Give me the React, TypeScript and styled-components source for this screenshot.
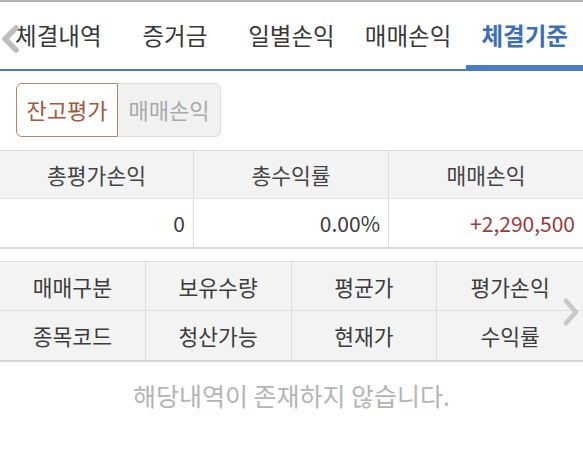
import React, { useState } from "react";
import styled, { createGlobalStyle, css } from "styled-components";

const GlobalStyle = createGlobalStyle`
  html, body { margin: 0; padding: 0; background: #ffffff; }
  body { font-family: "Noto Sans CJK KR", "Noto Sans", sans-serif; color: #333; }
  * { box-sizing: border-box; }
`;

const Page = styled.div`
  width: 583px;
  height: 453px;
  overflow: hidden;
  border-top: 2px solid #b3b3b3;
  position: relative;
`;

const TabBar = styled.div`
  position: relative;
  display: grid;
  grid-template-columns: repeat(5, 1fr);
  height: 69px;
  border-bottom: 2px solid #4a7cc6;
`;

const Tab = styled.div<{ $active?: boolean }>`
  display: flex;
  align-items: center;
  justify-content: center;
  font-size: 23.5px;
  color: #383838;
  padding-bottom: 2px;
  white-space: nowrap;
  ${(p) =>
    p.$active &&
    css`
      color: #3b6fb6;
      font-weight: 700;
      box-shadow: inset 0 -4px 0 #4a7cc6;
    `}
`;

const ChevronLeft = styled.svg`
  position: absolute;
  left: 0;
  top: 22px;
`;

const ChevronRight = styled.svg`
  position: absolute;
  right: 4px;
  top: 296px;
`;

const SegmentRow = styled.div`
  display: flex;
  padding: 12px 0 0 16px;
`;

const Segment = styled.div`
  display: flex;
  height: 54px;
`;

const SegButton = styled.div<{ $active?: boolean }>`
  display: flex;
  align-items: center;
  justify-content: center;
  font-size: 22px;
  padding: 0 0 2px;
  white-space: nowrap;
  ${(p) =>
    p.$active
      ? css`
          width: 102px;
          color: #a4593a;
          background: #ffffff;
          border: 1px solid #b98467;
          border-radius: 6px 0 0 6px;
        `
      : css`
          width: 103px;
          color: #a9a9a9;
          background: #f1f1f1;
          border: 1px solid #dcdcdc;
          border-left: none;
          border-radius: 0 6px 6px 0;
        `}
`;

const SummaryTable = styled.div`
  margin-top: 13px;
  display: grid;
  grid-template-columns: 194px 195px 1fr;
  border-top: 1px solid #dcdcdc;
  border-bottom: 2px solid #dcdcdc;
`;

const Cell = styled.div<{ $head?: boolean; $last?: boolean }>`
  height: 48px;
  display: flex;
  align-items: center;
  font-size: 21.5px;
  border-right: ${(p) => (p.$last ? "none" : "1px solid #dcdcdc")};
  ${(p) =>
    p.$head
      ? css`
          justify-content: center;
          background: #f3f3f3;
          color: #444;
          border-bottom: 1px solid #e3e3e3;
        `
      : css`
          justify-content: flex-end;
          padding-right: 8px;
          background: #ffffff;
          color: #3a3a3a;
          font-size: 21px;
        `}
`;

const Value = styled.span<{ $up?: boolean }>`
  color: ${(p) => (p.$up ? "#9c3a36" : "#3a3a3a")};
`;

const ColumnTable = styled.div`
  margin-top: 12px;
  display: grid;
  grid-template-columns: repeat(4, 1fr);
  border-top: 1px solid #dcdcdc;
  border-bottom: 2px solid #d6d6d6;
  background: #f3f3f3;
`;

const ColCell = styled.div<{ $last?: boolean; $top?: boolean }>`
  height: 49px;
  display: flex;
  align-items: center;
  justify-content: center;
  font-size: 21.5px;
  color: #3c3c3c;
  border-right: ${(p) => (p.$last ? "none" : "1px solid #dcdcdc")};
  border-bottom: ${(p) => (p.$top ? "1px solid #e0e0e0" : "none")};
`;

const Empty = styled.div`
  text-align: center;
  margin-top: 15px;
  font-size: 25px;
  color: #b4b4b4;
  white-space: nowrap;
`;

const tabs = ["체결내역", "증거금", "일별손익", "매매손익", "체결기준"];
const cols1 = ["매매구분", "보유수량", "평균가", "평가손익"];
const cols2 = ["종목코드", "청산가능", "현재가", "수익률"];

export default function App() {
  const [seg, setSeg] = useState(0);
  return (
    <>
      <GlobalStyle />
      <Page>
        <TabBar>
          {tabs.map((t, i) => (
            <Tab key={t} $active={i === 4}>
              {t}
            </Tab>
          ))}
          <ChevronLeft width="20" height="30" viewBox="0 0 20 30">
            <path d="M16 4 L5 15 L16 26" fill="none" stroke="#bdbdbd" strokeWidth="5.5" strokeLinecap="round" strokeLinejoin="round" />
          </ChevronLeft>
        </TabBar>
        <SegmentRow>
          <Segment>
            <SegButton $active={seg === 0} onClick={() => setSeg(0)}>잔고평가</SegButton>
            <SegButton $active={seg === 1} onClick={() => setSeg(1)}>매매손익</SegButton>
          </Segment>
        </SegmentRow>
        <SummaryTable>
          <Cell $head>총평가손익</Cell>
          <Cell $head>총수익률</Cell>
          <Cell $head $last>매매손익</Cell>
          <Cell><Value>0</Value></Cell>
          <Cell><Value>0.00%</Value></Cell>
          <Cell $last><Value $up>+2,290,500</Value></Cell>
        </SummaryTable>
        <ColumnTable>
          {cols1.map((c, i) => (
            <ColCell key={c} $top $last={i === 3}>{c}</ColCell>
          ))}
          {cols2.map((c, i) => (
            <ColCell key={c} $last={i === 3}>{c}</ColCell>
          ))}
        </ColumnTable>
        <ChevronRight width="16" height="28" viewBox="0 0 16 28">
          <path d="M3 3 L13 14 L3 25" fill="none" stroke="#c8c8c8" strokeWidth="4.5" strokeLinecap="round" strokeLinejoin="round" />
        </ChevronRight>
        <Empty>해당내역이 존재하지 않습니다.</Empty>
      </Page>
    </>
  );
}
